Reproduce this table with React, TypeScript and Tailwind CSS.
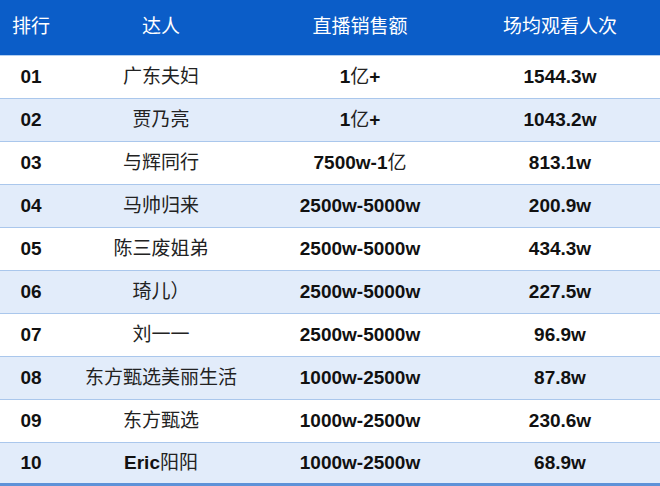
const rows = [
  ['01', '广东夫妇', '1亿+', '1544.3w'],
  ['02', '贾乃亮', '1亿+', '1043.2w'],
  ['03', '与辉同行', '7500w-1亿', '813.1w'],
  ['04', '马帅归来', '2500w-5000w', '200.9w'],
  ['05', '陈三废姐弟', '2500w-5000w', '434.3w'],
  ['06', '琦儿）', '2500w-5000w', '227.5w'],
  ['07', '刘一一', '2500w-5000w', '96.9w'],
  ['08', '东方甄选美丽生活', '1000w-2500w', '87.8w'],
  ['09', '东方甄选', '1000w-2500w', '230.6w'],
  ['10', 'Eric阳阳', '1000w-2500w', '68.9w'],
];

const font = "font-['Liberation_Sans','Noto_Sans_CJK_SC',sans-serif]";

// latin/digits are bold, chinese stays regular
function Mixed({ text }: { text: string }) {
  const parts = text.split(/([\u3000-\u9fff\uff00-\uffef]+)/).filter(Boolean);
  return (
    <>
      {parts.map((p, i) =>
        /[\u3000-\u9fff\uff00-\uffef]/.test(p) ? (
          <span key={i} className="font-normal text-[#222]">{p}</span>
        ) : (
          <span key={i} className="font-bold">{p}</span>
        )
      )}
    </>
  );
}

const cols = 'grid grid-cols-[62px_198px_200px_200px] items-center';

export default function App() {
  return (
    <div className={`w-[660px] h-[486px] bg-white text-[#111] ${font}`}>
      <div className={`${cols} h-[56px] bg-[#0b5dc8] border-b border-[#b3cff0] text-white text-[19px]`}>
        <div className="text-center">排行</div>
        <div className="text-center">达人</div>
        <div className="text-center">直播销售额</div>
        <div className="text-center">场均观看人次</div>
      </div>
      {rows.map((r, i) => (
        <div
          key={r[0]}
          className={`${cols} h-[43px] text-[19px] ${i % 2 === 1 ? 'bg-[#e2ecfa]' : 'bg-white'} ${
            i === rows.length - 1 ? 'border-b-[3px] border-[#5e92d8]' : 'border-b border-[#aac7ec]'
          }`}
        >
          <div className="text-center font-bold">{r[0]}</div>
          <div className="text-center"><Mixed text={r[1]} /></div>
          <div className="text-center"><Mixed text={r[2]} /></div>
          <div className="text-center font-bold">{r[3]}</div>
        </div>
      ))}
    </div>
  );
}
